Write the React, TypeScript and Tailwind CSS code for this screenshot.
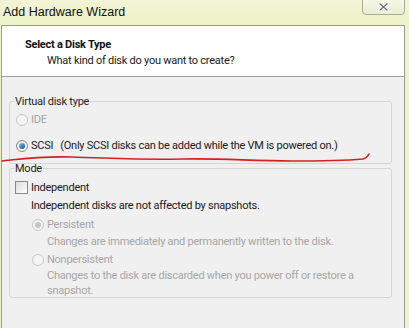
import React from "react";

const font = { fontFamily: 'Roboto, "Liberation Sans", sans-serif' };

const Radio = ({ checked, disabled }: { checked?: boolean; disabled?: boolean }) => (
  <span
    className={
      "flex h-[12px] w-[12px] shrink-0 items-center justify-center rounded-full border " +
      (disabled ? "border-[#c8c8c8] bg-[#f4f4f4]" : "border-[#8a8a8a] bg-gradient-to-br from-[#e4e4e4] to-white")
    }
  >
    {checked && (
      <span
        className={
          "h-[6px] w-[6px] rounded-full " +
          (disabled ? "bg-[#c4c4c4]" : "bg-gradient-to-br from-[#7ec4f0] to-[#0d4f8f]")
        }
      />
    )}
  </span>
);

const GroupBox = ({ title, className, children }: { title: string; className?: string; children: React.ReactNode }) => (
  <fieldset className={"rounded-[3px] border border-[#d5d5d5] px-0 " + (className ?? "")}>
    <legend className="ml-[4px] px-[1px] text-[#1e1e1e]">{title}</legend>
    {children}
  </fieldset>
);

export default function App() {
  return (
    <div
      className="flex h-[328px] w-[409px] flex-col overflow-hidden bg-[#eef2cd] text-[11px] leading-[15px] tracking-[-0.25px] text-[#1a1a1a]"
      style={font}
    >
      {/* title bar */}
      <div className="relative flex h-[25px] shrink-0 items-center bg-gradient-to-b from-[#f2f4d6] to-[#edf2c6] pl-[3px] tracking-normal">
        <span className="text-[12.5px] text-[#111]" style={{ fontFamily: '"Liberation Sans", sans-serif' }}>
          Add Hardware Wizard
        </span>
        <div className="absolute right-[4px] top-[-2px] flex h-[17px] w-[43px] items-center justify-center rounded-b-[4px] border border-[#a9ad96] bg-gradient-to-b from-[#f7f8ea] to-[#e9edd2]">
          <svg width="11" height="10" viewBox="0 0 11 10">
            <path d="M1.5 1.5 L9.5 8.5 M9.5 1.5 L1.5 8.5" stroke="#fff" strokeWidth="3.2" strokeLinecap="round" />
            <path d="M1.5 1.5 L9.5 8.5 M9.5 1.5 L1.5 8.5" stroke="#6c6f66" strokeWidth="1.2" />
          </svg>
        </div>
      </div>

      {/* body */}
      <div className="flex min-h-0 flex-1">
        <div className="relative ml-[1px] mr-[4px] flex flex-1 flex-col border-l border-r border-t border-[#9b9b9b] bg-[#f0f0f0]">
          {/* header */}
          <div className="h-[51px] shrink-0 border-b border-[#a0a0a0] bg-white pl-[23px] pt-[11px]">
            <div className="font-bold text-[#111]">Select a Disk Type</div>
            <div className="pl-[22px] pt-[1px]">What kind of disk do you want to create?</div>
          </div>

          <div className="flex flex-col px-[7px] pt-[17px]">
            <GroupBox title="Virtual disk type" className="mr-[5px] h-[70px]">
              <div className="flex flex-col gap-[11px] pl-[6px] pt-[3px]">
                <div className="flex items-center gap-[3px] text-[#a3a3a3]">
                  <Radio disabled />
                  <span>IDE</span>
                </div>
                <div className="flex items-center gap-[3px]">
                  <Radio checked />
                  <span>SCSI</span>
                  <span className="ml-[4px]">(Only SCSI disks can be added while the VM is powered on.)</span>
                </div>
              </div>
            </GroupBox>

            <GroupBox title="Mode" className="mr-[5px] mt-[-3px] h-[137px]">
              <div className="flex flex-col pl-[5px] pt-[4px]">
                <div className="flex items-center gap-[3px]">
                  <span className="h-[13px] w-[13px] shrink-0 border border-[#8a8a8a] bg-gradient-to-br from-[#dcdcdc] to-white" />
                  <span>Independent</span>
                </div>
                <div className="pl-[16px] pt-[3px]">Independent disks are not affected by snapshots.</div>
                <div className="flex flex-col pl-[17px] pt-[4px] text-[#a6a6a6]">
                  <div className="flex items-center gap-[3px]">
                    <Radio checked disabled />
                    <span>Persistent</span>
                  </div>
                  <div className="pl-[15px] pt-[2px]">Changes are immediately and permanently written to the disk.</div>
                  <div className="mt-[3px] flex items-center gap-[3px]">
                    <Radio disabled />
                    <span>Nonpersistent</span>
                  </div>
                  <div className="pl-[15px] pt-[1px]">
                    Changes to the disk are discarded when you power off or restore a
                    <br />
                    snapshot.
                  </div>
                </div>
              </div>
            </GroupBox>
          </div>

          {/* red hand-drawn underline */}
          <svg className="pointer-events-none absolute left-[-1px] top-[123px]" width="375" height="16" viewBox="0 0 375 16">
            <path
              d="M1 12 C 20 10, 40 7, 70 8 C 110 9, 140 11, 180 10 C 220 9, 250 12, 290 12 C 320 12, 350 11, 362 10 C 366 9, 367 7, 368 5"
              fill="none"
              stroke="#d42020"
              strokeWidth="1.6"
              strokeLinecap="round"
            />
          </svg>
        </div>
      </div>
    </div>
  );
}
